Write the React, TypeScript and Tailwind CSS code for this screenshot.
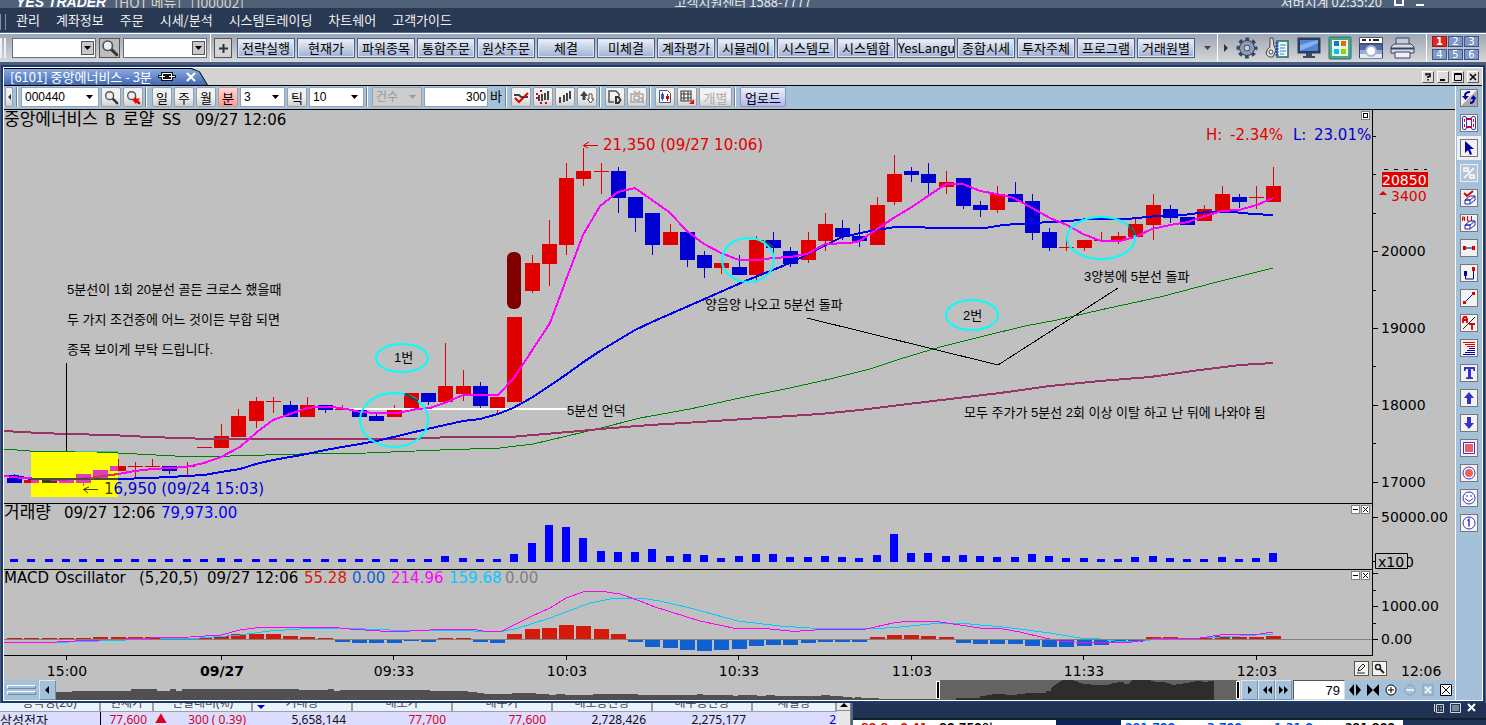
import type { ReactNode } from 'react';

const MENU = ['관리', '계좌정보', '주문', '시세/분석', '시스템트레이딩', '차트쉐어', '고객가이드'];

const QUICK_BUTTONS = [
  '전략실행', '현재가', '파워종목', '통합주문', '원샷주문', '체결', '미체결', '계좌평가',
  '시뮬레이', '시스템모', '시스템합', 'YesLangu', '종합시세', '투자주체', '프로그램', '거래원별',
];

const RED = '#e00000';
const BLUE = '#0000d0';
const PINK = '#e03cc0';
const OLIVE = '#404010';

// [color, body top, body bottom, high, low]
type Candle = [string, number, number, number, number];

const CANDLES: Candle[] = [
  [BLUE, 478, 483, 474, 483],
  [PINK, 480, 483, 480, 483],
  [OLIVE, 480, 483, 480, 483],
  [PINK, 480, 483, 480, 483],
  [PINK, 474, 483, 474, 486],
  [PINK, 470, 478, 470, 478],
  [RED, 466, 471, 459, 471],
  [RED, 466, 467, 462, 477],
  [RED, 466, 467, 459, 467],
  [BLUE, 466, 471, 466, 474],
  [RED, 466, 467, 462, 476],
  [RED, 447, 448, 447, 448],
  [RED, 436, 448, 424, 448],
  [RED, 416, 437, 409, 437],
  [RED, 401, 421, 397, 428],
  [RED, 401, 402, 397, 413],
  [BLUE, 405, 417, 401, 417],
  [RED, 405, 417, 397, 417],
  [BLUE, 405, 410, 405, 413],
  [RED, 409, 410, 405, 410],
  [BLUE, 409, 417, 409, 417],
  [BLUE, 416, 421, 412, 421],
  [RED, 409, 417, 405, 417],
  [RED, 393, 410, 393, 410],
  [BLUE, 393, 402, 393, 405],
  [RED, 386, 402, 343, 402],
  [RED, 386, 394, 370, 401],
  [BLUE, 386, 406, 382, 409],
  [RED, 397, 410, 397, 414],
  [RED, 317, 402, 317, 402],
  [RED, 263, 291, 255, 293],
  [RED, 244, 264, 220, 286],
  [RED, 178, 245, 163, 255],
  [RED, 171, 179, 148, 186],
  [RED, 171, 172, 163, 194],
  [BLUE, 171, 198, 167, 213],
  [BLUE, 197, 218, 197, 232],
  [BLUE, 213, 245, 213, 255],
  [RED, 232, 245, 224, 245],
  [BLUE, 232, 260, 232, 267],
  [BLUE, 255, 268, 251, 278],
  [RED, 263, 268, 263, 274],
  [BLUE, 267, 275, 255, 275],
  [RED, 240, 275, 236, 282],
  [BLUE, 240, 248, 232, 258],
  [BLUE, 251, 264, 247, 267],
  [RED, 240, 260, 232, 263],
  [RED, 224, 241, 213, 251],
  [BLUE, 228, 237, 220, 240],
  [BLUE, 236, 241, 224, 247],
  [RED, 205, 245, 197, 245],
  [RED, 174, 202, 155, 205],
  [BLUE, 171, 175, 167, 182],
  [BLUE, 174, 183, 163, 194],
  [RED, 182, 187, 171, 194],
  [BLUE, 178, 206, 178, 209],
  [BLUE, 205, 210, 201, 217],
  [RED, 194, 210, 186, 213],
  [BLUE, 194, 202, 182, 202],
  [BLUE, 201, 233, 194, 240],
  [BLUE, 232, 248, 228, 251],
  [RED, 247, 248, 236, 251],
  [RED, 240, 248, 240, 251],
  [RED, 240, 241, 232, 241],
  [RED, 236, 241, 232, 244],
  [RED, 224, 237, 217, 237],
  [RED, 205, 225, 194, 240],
  [BLUE, 209, 218, 205, 223],
  [BLUE, 217, 225, 217, 225],
  [RED, 209, 221, 205, 221],
  [RED, 194, 213, 186, 213],
  [BLUE, 197, 202, 194, 208],
  [RED, 197, 198, 186, 209],
  [RED, 186, 202, 167, 202],
];

const VOLUME = [
  3, 3, 3, 3, 3, 3, 3, 3, 3, 3, 3, 3, 4, 3, 3, 3, 3, 3, 3, 3, 3, 3, 3, 3, 3, 6, 4, 3, 3, 8, 19, 37, 35, 24, 11,
  10, 10, 13, 6, 8, 7, 4, 6, 8, 8, 5, 5, 6, 5, 4, 7, 28, 9, 9, 6, 7, 6, 5, 5, 8, 6, 4, 4, 3, 3, 5, 6, 4, 3, 3, 5,
  3, 4, 9,
];

const OSCILLATOR = [
  1, 1, 1, 1, 1, 2, 2, 2, 2, 1, 0, 1, 3, 5, 5, 5, 3, 2, 1, -2, -3, -3, -3, -1, -2, 1, 1, -2, -3, 5, 10, 11, 14,
  13, 10, 5, -2, -7, -8, -10, -11, -10, -9, -6, -5, -5, -3, -2, -2, -2, 2, 4, 4, 3, 2, -3, -4, -4, -4, -6, -7, -7,
  -6, -5, -2, -2, 2, 2, 1, 1, 3, 2, 2, 3,
];

const MA5 =
  '4,476 22,478 60,480 90,478 118,474 135,471 152,469 170,468 186,467 204,463 221,457 240,447 257,432 273,420 307,408 317,407 332,407 347,409 360,412 377,413 398,413 417,409 430,408 447,402 463,395 498,395 514,378 550,323 566,280 583,235 600,206 618,192 635,188 652,200 669,212 687,231 704,244 721,253 739,260 758,260 773,258 790,257 807,254 825,244 850,243 860,241 877,229 895,217 912,207 928,196 946,184 963,184 980,191 997,194 1014,198 1032,208 1050,218 1067,225 1083,234 1101,241 1120,241 1135,237 1152,229 1170,225 1188,222 1205,216 1222,211 1239,210 1257,205 1273,198';
const MA20 =
  '4,476 16,476 31,479 118,479 150,478 187,476 204,475 221,472 240,469 256,464 273,460 307,454 325,450 377,441 427,429 463,421 480,419 498,414 513,408 533,397 567,374 582,363 600,351 635,330 652,322 700,301 743,282 790,263 812,252 842,237 870,231 895,227 920,227 930,228 985,228 1003,225 1033,223 1070,221 1087,219 1127,219 1157,216 1183,215 1207,212 1233,212 1253,214 1273,215';
const MA60 =
  '4,449 30,451 75,451 118,453 175,456 230,456 300,454 367,453 440,450 500,448 533,444 567,436 597,429 640,418 690,409 740,398 790,388 830,379 870,369 900,359 940,347 980,337 1025,326 1057,320 1100,310 1160,297 1217,282 1273,268';
const MA120 =
  '4,431 40,433 67,434 110,435 150,437 210,439 330,439 410,439 450,437 510,437 545,434 580,431 600,429 650,425 700,422 760,418 820,414 860,410 900,405 950,399 1000,393 1050,386 1100,381 1150,377 1200,370 1240,365 1273,363';
const MACD =
  '4,642 57,642 75,641 125,639 150,638 190,637 221,635 240,630 262,627 285,627 330,627 350,629 380,631 394,632 410,631 450,629 470,629 490,632 502,631 532,616 550,608 566,598 583,592 600,591 620,594 640,601 655,607 700,621 738,629 760,628 790,631 800,631 830,629 862,630 875,627 893,623 910,621 940,622 960,625 980,628 1003,629 1020,632 1045,638 1060,641 1075,642 1125,643 1145,640 1160,638 1200,638 1220,635 1260,634 1273,632';
const SIGNAL =
  '4,643 70,642 126,640 160,639 200,638 240,635 270,631 300,629 340,628 390,630 450,630 498,632 515,629 550,618 566,612 590,603 615,598 640,598 660,601 690,608 738,621 780,626 810,628 870,629 900,627 930,624 960,623 980,625 1003,627 1050,633 1080,638 1100,639 1115,641 1140,641 1160,639 1200,638 1240,636 1273,634';

const HISTORY =
  'M56 700V692H72V691H131V689H157V691H170V689H176V691H182V689H299V690H328V689H334V691H340V690H430V691H468V692H477V693H484V694H512V693H536V694H549V695H556V694H565V695H593V694H638V695H697V694H703V695H733V696H738V695H757V696H766V695H775V696H821V695H830V696H843V697H852V698H855V697H861V698H879V699H939V700z';
const HISTORY_SELECTED =
  'M956 700V698H980V696H986V695H992V694H1006V695H1017V694H1025V693H1046V691H1051V688L1058 683L1063 680H1073L1083 684L1099 685H1109V684L1119 682H1124V684H1128L1133 680H1149L1156 682H1164L1173 685L1186 683L1196 681H1202V682L1214 681V700z';

const TIMES: [string, number][] = [
  ['15:00', 66], ['09/27', 221], ['09:33', 393], ['10:03', 566], ['10:33', 738], ['11:03', 911], ['11:33', 1083], ['12:03', 1256],
];

const barX = (i: number) => Math.round(14 + i * 17.25);

function Caret({ className = '' }: { className?: string }) {
  return (
    <svg className={`pointer-events-none absolute ${className}`} width="7" height="4" aria-hidden="true">
      <path d="M0 0h7L3.5 4z" fill="currentColor" />
    </svg>
  );
}

// drop-down with a raised grey arrow, used in the main toolbar
function Combo({ label }: { label: string }) {
  return (
    <div className="relative h-5 w-[84px] border border-[#5d6f8d] bg-white">
      <select aria-label={label} className="h-4 w-full appearance-none bg-white" />
      <span className="pointer-events-none absolute top-0.5 right-px h-3.5 w-[13px] border border-[#555] bg-[#c8c8c8]" />
      <Caret className="top-[7px] right-1 text-black" />
    </div>
  );
}

function FlatSelect({ label, value, className, disabled }: { label: string; value: string; className: string; disabled?: boolean }) {
  return (
    <div className={`relative h-5 border ${disabled ? 'border-[#a0a0a0] bg-[#cdcdcd] text-[#9a9a9a]' : 'border-[#8fa3b8] bg-white text-black'} ${className}`}>
      <select
        aria-label={label}
        disabled={disabled}
        className="h-[18px] w-full appearance-none pl-[3px] font-['Liberation_Sans','Noto_Sans_CJK_KR',sans-serif] text-xs leading-[18px] opacity-100"
      >
        <option>{value}</option>
      </select>
      <Caret className="top-[7px] right-[5px]" />
    </div>
  );
}

function Sep() {
  return <span className="h-5 w-0.5 border-l border-[#6f7f90] bg-white" />;
}

function ToolButton({ children, label, className = 'w-5', disabled }: { children: ReactNode; label?: string; className?: string; disabled?: boolean }) {
  return (
    <button
      type="button"
      aria-label={label}
      disabled={disabled}
      className={`flex h-5 items-center justify-center rounded-xs border border-[#9a9fa6] bg-linear-to-b from-[#f2f2f2] from-50% to-[#d0d0d0] leading-none ${className}`}
    >
      {children}
    </button>
  );
}

function Lens({ size = 16, arrow = false }: { size?: number; arrow?: boolean }) {
  return (
    <svg width={size} height={size} viewBox="0 0 16 16" fill="none" aria-hidden="true">
      <path d="M9 9l5 5" stroke="#333" strokeWidth="2.6" strokeLinecap="round" />
      <circle cx="6" cy="6" r="4.2" fill="#e8f0f6" stroke="#555" strokeWidth="1.5" />
      {arrow && <path d="M7 11l4-4v2.500l4-1-2 3 2 3-4-1v2z" fill="#f00" />}
    </svg>
  );
}

function TitleStrip() {
  return (
    <header className="flex h-2 shrink-0 items-end justify-between overflow-hidden bg-[#4f6079] text-white">
      <div className="flex w-1/3 items-end gap-2 pl-4 leading-3">
        <span className="font-['Liberation_Sans',sans-serif] text-sm leading-3 font-bold whitespace-nowrap italic">YES TRADER</span>
        <span className="text-sm leading-3 whitespace-pre text-[#d9d0c4]">[HOT 메뉴]   [j00002]</span>
      </div>
      <span className="text-[13px] leading-3 text-[#e4e8ee]">고객지원센터 1588-7777</span>
      <div className="flex w-1/3 justify-end gap-3 pr-[62px] text-[13px] leading-3 text-[#e4e8ee]">
        <span>서버시계 02:35:20</span>
        <span className="size-2.5 border-2 border-white" />
        <span className="h-2.5 w-2 border-b-2 border-white" />
      </div>
    </header>
  );
}

function MenuBar() {
  return (
    <nav className="flex h-6 shrink-0 items-center bg-[#293953] text-[13px] text-[#f0f0f0]">
      <span className="mt-1 h-4 w-1.5 border-x border-[#8290a6]" />
      <ul className="flex gap-4 pl-2.5">
        {MENU.map((item) => (
          <li key={item}>
            <a href="#" className="block leading-[22px]">{item}</a>
          </li>
        ))}
      </ul>
    </nav>
  );
}

function MainIcons() {
  return (
    <div className="flex items-center gap-[7px] pl-[7px]">
      <button type="button" aria-label="설정">
        <svg width="22" height="22" viewBox="0 0 22 22" fill="none">
          <circle cx="11" cy="11" r="8.500" stroke="#38465f" strokeWidth="4" strokeDasharray="3.600 3.075" strokeDashoffset="1.800" />
          <circle cx="11" cy="11" r="6" stroke="#38465f" strokeWidth="4" />
          <circle cx="11" cy="11" r="5.500" stroke="#8d9cb5" strokeWidth="3" />
          <circle cx="11" cy="11" r="3" fill="#c8ccd4" stroke="#38465f" />
        </svg>
      </button>
      <button type="button" aria-label="키 관리">
        <svg width="25" height="24" viewBox="0 0 25 24" fill="none">
          <path d="M5 2h3l1 8 2 4-3 7H4l-3-3 1-4 3-3z" fill="#ddd" stroke="#444" />
          <circle cx="6" cy="16" r="2" fill="#fff" stroke="#444" />
          <path d="M12 5h11v16H12z" fill="#eef6fb" stroke="#1e6a66" strokeWidth="1.500" />
          <path d="M15 9h6M15 12h5M15 15h6M15 18h4" stroke="#3c86a8" />
          <path d="M12 6v15" stroke="#2456c8" strokeWidth="3" strokeDasharray="2 1" />
        </svg>
      </button>
      <button type="button" aria-label="화면">
        <svg width="24" height="24" viewBox="0 0 24 24">
          <path d="M.5 1.500h23v16H.5z" fill="#2d3c5c" />
          <path d="M3 4h18v11H3z" fill="#4f86d9" />
          <path d="M3 15V9l18-5v3z" fill="#83b2f0" />
          <path d="M9 17h6v3h3v2H6v-2h3z" fill="#3d4960" />
        </svg>
      </button>
      <button type="button" aria-label="배치">
        <svg width="24" height="24" viewBox="0 0 24 24">
          <rect x="1" y="1" width="22" height="22" rx="1" fill="#4fa58f" stroke="#2a7565" />
          <path d="M4 4h16v16H4z" fill="#e6f4ef" />
          <path d="M6 5h5v5H6z" fill="#1b78b8" />
          <path d="M13 5h5v5h-5z" fill="#e07000" />
          <path d="M6 13h5v5H6z" fill="#00c8e0" />
          <path d="M13 13h5v5h-5z" fill="#8ed400" />
        </svg>
      </button>
      <button type="button" aria-label="캡처">
        <svg width="24" height="24" viewBox="0 0 24 24">
          <path d="M.5 1.500h23v6H.5z" fill="#fff" stroke="#475570" />
          <path d="M3 4h4M10 4h2M14 4h6" stroke="#223" strokeWidth="2" />
          <path d="M.5 8h23v14H.5z" fill="#5369a8" stroke="#33415c" />
          <path d="M1 14h22v4H1z" fill="#9aa9d4" />
          <path d="M1 18h22v4H1z" fill="#e4e9f6" />
          <circle cx="12" cy="15" r="5" fill="#fff" stroke="#a8b4d8" strokeWidth="2" />
        </svg>
      </button>
      <button type="button" aria-label="인쇄">
        <svg width="25" height="24" viewBox="0 0 25 24">
          <path d="M6 2h13v9H6z" fill="#c4ccda" stroke="#38455f" />
          <path d="M1 11l3-3h17l3 3v6H1z" fill="#d6dbe5" stroke="#38455f" />
          <path d="M1 12.500h23" stroke="#38455f" strokeWidth="2" />
          <path d="M5 16h15v6H5z" fill="#eef" stroke="#38455f" />
        </svg>
      </button>
    </div>
  );
}

function MainToolbar() {
  return (
    <div className="flex h-7 shrink-0 items-center overflow-hidden bg-linear-to-b from-[#9fa6b2] to-[#d6d8da] text-[13px]">
      <span className="h-5 w-1.5 shrink-0 border-x-2 border-[#eef0f3]" />
      <div className="flex items-center gap-[3px] pl-1.5">
        <Combo label="화면 번호" />
        <button type="button" aria-label="검색" className="flex h-5 w-[21px] items-center justify-center border border-[#555] bg-[#bdbdbd]">
          <Lens size={18} />
        </button>
        <Combo label="즐겨찾기" />
      </div>
      <span className="mx-[3px] h-7 w-px shrink-0 bg-white" />
      <button type="button" aria-label="추가" className="flex h-5 w-[18px] shrink-0 items-center justify-center border border-[#555] bg-[#d4d4d4]">
        <svg width="9" height="9"><path d="M3.500 0h2v3.500H9v2H5.500V9h-2V5.500H0v-2h3.500z" fill="#333" /></svg>
      </button>
      <div className="flex gap-0.5 pl-[5px]">
        {QUICK_BUTTONS.map((name) => (
          <button
            key={name}
            type="button"
            className="h-5 w-[58px] shrink-0 overflow-hidden border border-[#45608f] bg-linear-to-b from-[#eef1f8] to-[#9fb0d0] text-center leading-4 whitespace-nowrap inset-ring inset-ring-[#dfe6f2]"
          >
            {name}
          </button>
        ))}
      </div>
      <button type="button" aria-label="더 보기" className="relative ml-[9px] h-5 w-2 shrink-0 text-[#444]">
        <Caret className="top-2 left-0" />
      </button>
      <span className="ml-[5px] h-7 w-px shrink-0 bg-white" />
      <svg width="5" height="8" className="ml-1.5 shrink-0"><path d="M0 0v8l4-4z" fill="#333" /></svg>
      <MainIcons />
      <span className="ml-[11px] h-7 w-px shrink-0 bg-white" />
      <div className="ml-auto grid shrink-0 grid-cols-3 gap-x-px gap-y-0.5 pr-[7px]">
        {[1, 2, 3, 4, 5, 6].map((n) => (
          <button
            key={n}
            type="button"
            className={`h-[11px] w-[15px] border text-center font-['DejaVu_Sans',sans-serif] text-[10px] leading-[9px] text-white ${n === 1 ? 'border-[#a01818] bg-[#d82828] font-bold' : 'border-[#3a5590] bg-[#7f98c4]'}`}
          >
            {n}
          </button>
        ))}
      </div>
    </div>
  );
}

function WindowButton({ label, children }: { label: string; children: ReactNode }) {
  return (
    <button type="button" aria-label={label} className="size-3 border border-t-white border-r-[#555] border-b-[#555] border-l-white bg-[#dcdcdc]">
      <svg viewBox="0 0 10 10" width="10" height="10" fill="none" stroke="#000" strokeWidth="1.500">{children}</svg>
    </button>
  );
}

function WindowTitle() {
  return (
    <div className="flex h-[18px] items-center justify-between border-b border-black bg-[#d3d3d3]">
      <div className="h-[17px] bg-black pr-px [clip-path:polygon(0_0,92%_0,96%_20%,100%_100%,0_100%)]">
        <div className="flex h-[17px] w-[203px] items-center gap-1.5 bg-linear-to-b from-[#8fb0e6] to-[#4266b0] pl-1.5 text-[13px] leading-none text-white [clip-path:polygon(0_1px,92%_1px,96%_22%,100%_100%,0_100%)]">
          <h1 className="whitespace-nowrap">[6101] 중앙에너비스 - 3분</h1>
          <svg width="18" height="9" viewBox="0 0 18 9" fill="none" stroke="#111" strokeWidth="1.200">
            <path d="M4.500 4V1.500h9V4M4.500 5v2.500h9V5" strokeWidth="3" />
            <path d="M0 4.500h18" strokeWidth="3" />
            <path d="M4.500 4V1.500h9V4M4.500 5v2.500h9V5" stroke="#fff" strokeWidth="1" />
            <path d="M1 4.500h6M11 4.500h6" stroke="#fff" />
          </svg>
          <button type="button" aria-label="탭 닫기" className="ml-1">
            <svg width="10" height="10" stroke="#fff" strokeWidth="2.200"><path d="M1 1l8 8M9 1l-8 8" /></svg>
          </button>
        </div>
      </div>
      <div className="flex gap-[3px] pr-[3px]">
        <WindowButton label="도움말"><path d="M3 3.500V2h4v2.500H5V6M5 7v1.500" /></WindowButton>
        <WindowButton label="최소화"><path d="M2 8h5" strokeWidth="2" /></WindowButton>
        <WindowButton label="최대화"><path d="M1.500 1.500h7v7h-7zM1 2.500h8" strokeWidth="1" /></WindowButton>
        <WindowButton label="닫기"><path d="M2 2l6 6M8 2L2 8" /></WindowButton>
      </div>
    </div>
  );
}

function ChartToolbar() {
  return (
    <div className="flex h-6 items-start overflow-hidden border-b border-black bg-[#a5c0d9] pt-px text-[13px] leading-none">
      <ToolButton label="접기" className="ml-px w-2">
        <svg width="3" height="6"><path d="M3 0v6L0 3z" fill="#333" /></svg>
      </ToolButton>
      <div className="flex pl-[3px]"><Sep /></div>
      <div className="flex gap-0.5 pl-[3px]">
        <FlatSelect label="종목코드" value="000440" className="w-[78px]" />
        <ToolButton label="종목 검색"><Lens size={15} /></ToolButton>
        <ToolButton label="이전 종목"><Lens size={15} arrow /></ToolButton>
        <Sep />
      </div>
      <div className="flex gap-0.5 pl-[5px]">
        <ToolButton>일</ToolButton>
        <ToolButton>주</ToolButton>
        <ToolButton>월</ToolButton>
        <button type="button" className="h-5 w-5 rounded-xs border border-[#b8a08c] bg-linear-to-b from-[#ffd8d8] to-[#ff9a9a] leading-none">분</button>
        <FlatSelect label="분 간격" value="3" className="w-[45px]" />
        <ToolButton>틱</ToolButton>
        <FlatSelect label="틱 간격" value="10" className="w-[55px]" />
        <Sep />
      </div>
      <label className="flex gap-0.5 pl-1">
        <FlatSelect label="건수" value="건수" disabled className="w-[50px]" />
        <input
          aria-label="봉 개수"
          defaultValue="300"
          className="h-5 w-16 border border-[#8fa3b8] bg-white pr-px text-right font-['Liberation_Sans',sans-serif] text-xs"
        />
        <span className="leading-[18px]">바</span>
      </label>
      <div className="flex gap-0.5 pl-[3px]">
        <Sep />
        <ToolButton label="추세" className="ml-0.5 w-5">
          <svg width="16" height="16" fill="none"><path d="M1 6h5l2 2h7" stroke="#444" strokeWidth="2" /><path d="M2 9l4 4 9-9" stroke="#e00000" strokeWidth="2" /></svg>
        </ToolButton>
        <ToolButton label="신호">
          <svg width="16" height="16" fill="none" strokeWidth="2"><path d="M4 6v6M7 5v7M10 4v7M13 2v9" stroke="#444" /><path d="M6 1v2M2 4v2M6 13v2M11 13v2M2 8v2" stroke="#e00000" /></svg>
        </ToolButton>
        <ToolButton label="봉">
          <svg width="16" height="16" strokeWidth="2"><path d="M3 8v6M7 6v7M10 4v8M13 2v8" stroke="#444" /></svg>
        </ToolButton>
        <ToolButton label="정렬">
          <svg width="16" height="16"><path d="M5 2L1 7h2.500v4h3V7H9z" fill="#444" /><path d="M11.500 14l-3-4H10V5h3v5h2z" fill="#fff" stroke="#444" /></svg>
        </ToolButton>
        <Sep />
      </div>
      <div className="flex gap-0.5 pl-1">
        <ToolButton label="문서">
          <svg width="16" height="16" fill="none" stroke="#555" strokeWidth="1.500"><path d="M7 13H2V2h7l3 3v2" /><path d="M9 8h2.500l2 3-2 3H9z" stroke="#333" strokeWidth="2" /></svg>
        </ToolButton>
        <ToolButton label="방송" disabled>
          <svg width="16" height="16" fill="none" stroke="#aaa" strokeWidth="1.500"><path d="M2 5h12v8H2zM5 2l3 3 3-3M5 7h5v4H5zM10 14V9h3v2l2 3" /></svg>
        </ToolButton>
        <Sep />
      </div>
      <div className="flex gap-0.5 pl-1">
        <ToolButton label="비교 차트">
          <svg width="16" height="16" fill="none"><path d="M2.500 13.500v-12h8l3 3v9z" fill="#fff" stroke="#555" /><path d="M5.500 3v9" stroke="#2060e0" /><path d="M5.500 5v5" stroke="#2060e0" strokeWidth="3" /><path d="M10.500 5v7" stroke="#e00000" /><path d="M10.500 7v3" stroke="#e00000" strokeWidth="3" /></svg>
        </ToolButton>
        <ToolButton label="격자">
          <svg width="16" height="16" fill="none"><path d="M2 2h10v10H2zM2 5h10M2 9h10M5 2v10M9 2v10" stroke="#444" strokeWidth="1.200" /><path d="M15 10v5h-5z" fill="#f00" /></svg>
        </ToolButton>
        <ToolButton className="w-[33px] text-[#aaa]" disabled>개별</ToolButton>
        <Sep />
        <button type="button" className="ml-0.5 h-5 w-[46px] rounded-xs border border-[#8e94b4] bg-linear-to-b from-[#eceeff] to-[#b3b8ea] leading-none">업로드</button>
      </div>
    </div>
  );
}

function AxisTick({ y, label, small }: { y: number; label?: string; small?: boolean }) {
  return (
    <>
      <path d={`M1372 ${y}.5h${small ? 4 : 6}`} stroke="#000" shapeRendering="crispEdges" />
      {label && <text x="1381" y={y + 5} className="text-[14px]">{label}</text>}
    </>
  );
}

function PriceChart() {
  return (
    <div className="relative">
      <svg viewBox="4 110 1451 393" className="block h-auto w-full font-['DejaVu_Sans','Noto_Sans_CJK_KR',sans-serif] text-[15px]">
        <path d="M31 451h87v46H31z" fill="#ff0" />
        <g shapeRendering="crispEdges">
          {CANDLES.map(([color, top, bottom, high, low], i) => (
            <g key={i} fill={color}>
              <rect x={barX(i)} y={high} width="1" height={low - high} />
              <rect x={barX(i) - 7} y={top} width="15" height={bottom - top} />
            </g>
          ))}
          <path d="M24 480h7v3h-7z" fill={RED} />
          <path d="M110 466h8v5h-8z" fill={PINK} />
        </g>
        <g fill="none" shapeRendering="crispEdges">
          <path d="M343 409h224" stroke="#fff" strokeWidth="2" />
          <polyline points={MA60} stroke="#008000" />
          <polyline points={MA120} stroke="#993366" strokeWidth="2" />
          <polyline points={MA20} stroke="#0000f0" strokeWidth="2" />
          <polyline points={MA5} stroke="#f0f" strokeWidth="2" />
          <path d="M31 479h87" stroke="#4a4a3a" strokeWidth="2" />
          <path d="M90 478l28-4" stroke="#c83c50" strokeWidth="2" />
          <path d="M75 451.500h43" stroke="#40c0a0" />
        </g>
        <rect x="507" y="252" width="14" height="57" rx="6" fill="#800000" />
        <g fill="none" stroke="#0ff" strokeWidth="2">
          <ellipse cx="402" cy="358" rx="26" ry="14" />
          <ellipse cx="394" cy="420" rx="34" ry="27" />
          <ellipse cx="748" cy="260" rx="26" ry="22" />
          <ellipse cx="1101" cy="238" rx="34" ry="21" />
          <ellipse cx="972" cy="315" rx="26" ry="15" />
        </g>
        <g fill="none" stroke="#204848" strokeWidth="2">
          <path d="M405 394l13 7M765 241l8 6M1129 225l6 10" />
        </g>
        <g fill="none" stroke="#000" shapeRendering="crispEdges">
          <path d="M66.500 363v88" />
          <path d="M807 318l191 47 120-77" />
        </g>

        <g className="font-['Liberation_Sans','Noto_Sans_CJK_KR',sans-serif] text-[13px]">
          <text x="67" y="294">5분선이 1회 20분선 골든 크로스 했을때</text>
          <text x="67" y="324">두 가지 조건중에 어느 것이든 부합 되면</text>
          <text x="67" y="354">종목 보이게 부탁 드립니다.</text>
          <text x="394" y="362">1번</text>
          <text x="567" y="415">5분선 언덕</text>
          <text x="705" y="309">양음양 나오고 5분선 돌파</text>
          <text x="963" y="320">2번</text>
          <text x="1084" y="281">3양봉에 5분선 돌파</text>
          <text x="964" y="417">모두 주가가 5분선 2회 이상 이탈 하고 난 뒤에 나와야 됨</text>
        </g>

        <text x="4" y="125" className="text-[17px]">중앙에너비스</text>
        <text x="105" y="125">B</text>
        <text x="123" y="125" className="text-[17px]">로얄</text>
        <text x="162" y="125">SS</text>
        <text x="195" y="125">09/27 12:06</text>
        <g fill={RED}>
          <path d="M583 145.500h15M584 145l5-3M584 146l4 2" stroke={RED} fill="none" />
          <text x="603" y="150">21,350 (09/27 10:06)</text>
          <text x="1206" y="140">H:</text>
          <text x="1230" y="140">-2.34%</text>
        </g>
        <g fill={BLUE}>
          <text x="1293" y="140">L:</text>
          <text x="1314" y="140">23.01%</text>
          <path d="M83 489.500h15M84 490l4 3M84 489l5-2" stroke={OLIVE} fill="none" />
          <text x="104" y="494"><tspan fill={OLIVE}>1</tspan>6,950 (09/24 15:03)</text>
        </g>

        <path d="M1372.500 110v393" stroke="#000" shapeRendering="crispEdges" />
        {[136, 174, 213, 290, 366, 443].map((y) => <AxisTick key={y} y={y} small />)}
        <AxisTick y={251} label="20000" />
        <AxisTick y={328} label="19000" />
        <AxisTick y={405} label="18000" />
        <AxisTick y={482} label="17000" />
        <path d="M1384 169.500h43" stroke="#000" strokeDasharray="4 6" />
        <path d="M1382 172h46v15h-46z" fill={RED} />
        <text x="1382" y="185" fill="#fff" className="text-[14px]">20850</text>
        <path d="M1379 195h8l-4-4z" fill={RED} />
        <text x="1391" y="201" fill={RED} className="text-[14px]">3400</text>
      </svg>
      <button type="button" aria-label="패널 확대" className="absolute top-px right-[85px] size-[9px] border border-[#808080] bg-white">
        <span className="m-px block size-[5px] border border-black" />
      </button>
    </div>
  );
}

function PanelButtons() {
  return (
    <div className="absolute top-0.5 right-[85px] flex gap-px">
      <button type="button" aria-label="패널 최소화" className="size-[9px] border border-[#808080] bg-white">
        <svg width="7" height="7" className="block"><path d="M1 3.500h5" stroke="#000" /></svg>
      </button>
      <button type="button" aria-label="패널 닫기" className="size-[9px] border border-[#808080] bg-white">
        <svg width="7" height="7" className="block"><path d="M1 1l5 5M6 1L1 6" stroke="#000" /></svg>
      </button>
    </div>
  );
}

function VolumeChart() {
  return (
    <div className="relative">
      <svg viewBox="4 503 1451 66" className="block h-auto w-full font-['DejaVu_Sans','Noto_Sans_CJK_KR',sans-serif] text-[15px]">
        <path d="M4 503.500h1368M1372.500 503v66" stroke="#000" shapeRendering="crispEdges" />
        <g fill="#00f" shapeRendering="crispEdges">
          {VOLUME.map((h, i) => <rect key={i} x={barX(i) - 4} y={562 - h} width="8" height={h} />)}
        </g>
        <text x="4" y="518" className="text-[17px]">거래량</text>
        <text x="64" y="518">09/27 12:06</text>
        <text x="161" y="518" fill="#00f">79,973.00</text>
        <AxisTick y={517} label="50000.00" />
        <AxisTick y={561} />
        <text x="1405" y="567" className="text-[14px]">0</text>
        <path d="M1375.500 553.500h32v15h-32z" fill="#c0c0c0" stroke="#000" />
        <text x="1378" y="567" className="text-[14px]">x10</text>
      </svg>
      <PanelButtons />
    </div>
  );
}

function MacdChart() {
  return (
    <div className="relative">
      <svg viewBox="4 569 1451 86" className="block h-auto w-full font-['DejaVu_Sans',sans-serif] text-[15px]">
        <g shapeRendering="crispEdges">
          <path d="M4 569.500h1368M1372.500 569v86" stroke="#000" />
          {OSCILLATOR.map((h, i) => (
            <rect key={i} x={barX(i) - 7} y={h > 0 ? 639 - h : 640} width="15" height={Math.abs(h)} fill={h > 0 ? '#d41a0a' : '#1260d0'} />
          ))}
          <polyline points={SIGNAL} fill="none" stroke="#0cf" />
          <polyline points={MACD} fill="none" stroke="#f0f" />
          <path d="M4 639.500h1368" stroke="#808080" />
        </g>
        <text x="4" y="583">MACD</text>
        <text x="55" y="583">Oscillator</text>
        <text x="139" y="583">(5,20,5)</text>
        <text x="207" y="583">09/27 12:06</text>
        <text x="304" y="583" fill="#d41a0a">55.28</text>
        <text x="352" y="583" fill="#1260d0">0.00</text>
        <text x="391" y="583" fill="#f0f">214.96</text>
        <text x="449" y="583" fill="#0cf">159.68</text>
        <text x="505" y="583" fill="#808080">0.00</text>
        <AxisTick y={573} />
        <AxisTick y={590} small />
        <AxisTick y={606} label="1000.00" />
        <AxisTick y={623} small />
        <AxisTick y={639} label="0.00" />
      </svg>
      <PanelButtons />
    </div>
  );
}

function TimeAxis() {
  return (
    <div className="relative">
      <svg viewBox="4 655 1451 25" className="block h-auto w-full font-['DejaVu_Sans',sans-serif] text-[14px]">
        <path d="M4 655.500h1369" stroke="#000" shapeRendering="crispEdges" />
        {TIMES.map(([label, x]) => (
          <g key={label}>
            <path d={`M${x}.5 655v5`} stroke="#000" shapeRendering="crispEdges" />
            <text x={x + 1} y="676" textAnchor="middle" className={label === '09/27' ? 'font-bold' : ''}>{label}</text>
          </g>
        ))}
        <text x="1401" y="676">12:06</text>
      </svg>
      <div className="absolute top-1.5 right-[68px] flex gap-[3px]">
        <button type="button" aria-label="그리기" className="size-[15px] border border-[#555] bg-[#f4f4ee]">
          <svg width="13" height="13" fill="none" stroke="#222"><path d="M3 9l1-3 4-4 2 2-4 4zM2 11h8" /></svg>
        </button>
        <button type="button" aria-label="확대" className="size-[15px] border border-[#555] bg-[#f4f4ee]">
          <svg width="13" height="13" fill="none" stroke="#222"><circle cx="5" cy="5" r="2.500" strokeWidth="1.500" /><path d="M7 7l4 4" strokeWidth="2" /></svg>
        </button>
      </div>
    </div>
  );
}

function NavButton({ label, path }: { label: string; path: string }) {
  return (
    <button type="button" aria-label={label} className="flex h-5 w-[17px] shrink-0 items-center justify-center border border-t-[#dbe8f4] border-r-[#7790a8] border-b-[#7790a8] border-l-[#dbe8f4] bg-[#a5c0d9]">
      <svg width="10" height="8"><path d={path} /></svg>
    </button>
  );
}

function Navigator() {
  return (
    <div className="flex h-5 items-center bg-[#a5c0d9]">
      <div className="flex w-[35px] flex-col gap-0.5 px-[3px]">
        <span className="h-1 border border-t-white border-r-[#6f8ba5] border-b-[#6f8ba5] border-l-white" />
        <span className="h-1 border border-t-white border-r-[#6f8ba5] border-b-[#6f8ba5] border-l-white" />
      </div>
      <NavButton label="왼쪽으로" path="M6 0v8L2 4z" />
      <svg viewBox="56 680 1185 20" preserveAspectRatio="none" className="h-5 min-w-0 flex-1" shapeRendering="crispEdges">
        <path d="M56 680h1185v20H56z" fill="#c0c0c0" />
        <path d={HISTORY} fill="#505050" />
        <path d="M940 680h297v20H940z" fill="#636363" />
        <path d={HISTORY_SELECTED} fill="#2d2d2d" />
        <path d="M936 681h4v18h-4zM1236 681h4v18h-4z" fill="#fff" />
        <path d="M937 682h2v16h-2zM1237 682h2v16h-2z" fill="#000" />
      </svg>
      <NavButton label="오른쪽으로" path="M3 0v8l4-4z" />
      <NavButton label="처음으로" path="M5 0v8L1 4zM10 0v8L6 4z" />
      <NavButton label="끝으로" path="M0 0v8l4-4zM5 0v8l4-4z" />
      <input
        aria-label="표시 봉 수"
        defaultValue="79"
        className="mx-px h-5 w-[52px] border border-t-[#555] border-r-[#ddd] border-b-[#ddd] border-l-[#555] bg-white pr-1 text-right font-['Liberation_Sans',sans-serif] text-[13px]"
      />
      <div className="flex w-[109px] items-center justify-around">
        <button type="button" aria-label="넓게"><svg width="12" height="12"><path d="M5 0v12L0 6zM7 0v12l5-6z" /></svg></button>
        <button type="button" aria-label="좁게"><svg width="12" height="12"><path d="M0 0v12l6-6zM12 0v12L6 6z" /></svg></button>
        <button type="button" aria-label="확대"><svg width="12" height="12" fill="#fff" stroke="#000"><circle cx="6" cy="6" r="5" /><path d="M3 6h6M6 3v6" /></svg></button>
        <button type="button" aria-label="축소" disabled><svg width="12" height="12" fill="none" stroke="#e6eef5"><circle cx="6" cy="6" r="5" stroke="#8c9cac" /><path d="M2 6h8" strokeWidth="2" /></svg></button>
        <button type="button" aria-label="맞춤" disabled><svg width="12" height="12" fill="none" stroke="#e6eef5"><path d="M1 1h10v10H1z" stroke="#8c9cac" /><path d="M3 3l6 6M9 3L3 9" strokeWidth="2" /></svg></button>
        <button type="button" aria-label="전체"><svg width="12" height="12" fill="#fff" stroke="#000"><path d="M.5.5h11v11H.5zM2 2l8 8M10 2l-8 8" /></svg></button>
      </div>
    </div>
  );
}

const ERASER = <path d="M4 10l5-4h5l-5 4zM4 10h5v4H4zM9 14l5-4V6" fill="#fff" stroke="#22a" />;

const DRAW_TOOLS: [string, ReactNode][] = [
  ['새로고침', <><path d="M16 0v16H0z" fill="#aaa" /><path d="M9 2C5 2 4 4 4 6M13 8c0 4-2 5-4 5" fill="none" stroke="#00a" strokeWidth="2" /><path d="M1 6h7L4.500 10zM9.500 9h6L12.500 5z" fill="#00a" /></>],
  ['동기화', <><rect x="1.500" y="1.500" width="4" height="13" rx="1.500" fill="#fff" stroke="#33c" /><rect x="10.500" y="1.500" width="4" height="13" rx="1.500" fill="#fff" stroke="#33c" /><path d="M3.500 4v8M12.500 4v8" stroke="#d00" strokeDasharray="3 2" /><path d="M6 4h4M6 12h4" stroke="#d00" strokeWidth="2" /></>],
  ['선택', <path d="M4 1v12l3-3 2 5 2-1-2-5h4z" fill="#00a" />],
  ['비율', <path d="M3 13L13 3M3 3h4v3H3zM9 10h4v3H9z" fill="none" stroke="#fff" strokeWidth="1.500" />],
  ['선택 지우기', <><path d="M3 3l3 3 6-5" fill="none" stroke="#d00" strokeWidth="2" />{ERASER}</>],
  ['모두 지우기', <><path d="M1.500 6V2h2v4M1.500 4h2M6.500 1v5h2M10.500 1v5h2" fill="none" stroke="#d00" />{ERASER}</>],
  ['수평선', <><path d="M2 8h12" stroke="#00a" /><path d="M2 6h3v4H2zM11 6h3v4h-3z" fill="#d00" /></>],
  ['채널', <><path d="M4.500 10v4h8V5" fill="none" stroke="#00a" /><path d="M3 6h3v5H3z" fill="#00a" /><path d="M11 2h3v4h-3z" fill="#d00" /></>],
  ['추세선', <><path d="M3 13L13 3" stroke="#00a" /><path d="M2 11h3v3H2zM11 2h3v3h-3z" fill="#d00" /></>],
  ['각도', <><path d="M2 14L14 2" stroke="#222" /><path d="M2 8V4l1-2h2l1 2v4M2 5h4M8 9h6M11 9v6" fill="none" stroke="#d00" strokeWidth="1.800" /></>],
  ['피보나치', <><path d="M2 2.500h12M4 4.500h10M6 6.500h8" stroke="#d00" /><path d="M8 8.500h6M6 10.500h8M4 12.500h10M2 14.500h12" stroke="#00a" /></>],
  ['문자', <path d="M3 2h11v4h-1.500L12 4h-2v8l2 .5V14H5v-1.500L7 12V4H5l-.5 2H3z" fill="#33c" />],
  ['위 화살표', <path d="M8 2l5 6h-3v6H6V8H3z" fill="#33c" />],
  ['아래 화살표', <path d="M8 14l5-6h-3V2H6v6H3z" fill="#33c" />],
  ['사각형', <><path d="M2.500 2.500h11v11h-11z" fill="#fff" stroke="#33c" /><path d="M4 4h8v8H4z" fill="#f06060" /></>],
  ['원', <><circle cx="8" cy="8" r="6" fill="#fff" stroke="#33c" /><circle cx="8" cy="8" r="4" fill="#f06060" /></>],
  ['스마일', <><circle cx="8" cy="8" r="6" fill="#fff" stroke="#33c" /><path d="M4 8.500l4 3 4-3M6 5v2M10 5v2" fill="none" stroke="#33c" /></>],
  ['번호', <><circle cx="8" cy="8" r="6" fill="#fff" stroke="#33c" /><path d="M6.500 5.500L8 4.500v7" fill="none" stroke="#33c" strokeWidth="1.500" /></>],
];

function DrawTools() {
  return (
    <aside className="flex w-[27px] shrink-0 flex-col items-center gap-[7px] border-l border-white bg-[#a5c0d9] pt-[3px]">
      {DRAW_TOOLS.map(([label, icon], i) => (
        <button
          key={label}
          type="button"
          aria-label={label}
          className={`size-[18px] border ${i === 3 ? 'border-[#e8f0f6] bg-[#b4c4d2]' : 'border-[#777] bg-[#f2f2f2]'} ${i === 2 ? 'outline-3 outline-[#e9eff5]' : ''}`}
        >
          <svg width="16" height="16" viewBox="0 0 16 16">{icon}</svg>
        </button>
      ))}
    </aside>
  );
}

const QUOTE_COLUMNS = ['종목명(26)', '현재가', '전일대비(%)', '거래량', '매도가', '매수가', '매도총잔량', '매수총잔량', '체결량'];

function QuoteTable() {
  return (
    <div className="flex w-[851px] shrink-0 overflow-hidden bg-[#dcdcff] font-['Noto_Sans','Noto_Sans_CJK_KR',sans-serif] text-xs">
      <table className="-mt-2 w-[836px] table-fixed border-collapse">
        <colgroup>
          <col className="w-[100px]" />
          <col className="w-[53px]" />
          <col className="w-[99px]" />
          <col className="w-[100px]" />
          <col className="w-[100px]" />
          <col className="w-[100px]" />
          <col className="w-[100px]" />
          <col className="w-[100px]" />
          <col className="w-[84px]" />
        </colgroup>
        <thead>
          <tr className="h-4 bg-[#e9f3fb] text-[#445]">
            {QUOTE_COLUMNS.map((name) => (
              <th key={name} className="relative border-r-2 border-b border-[#a0a0a0] p-0 leading-4 font-normal whitespace-nowrap">
                {name === '거래량' && <span className="absolute bottom-0.5 left-1 border-x-4 border-t-4 border-x-transparent border-t-[#0000c0]" />}
                {name}
              </th>
            ))}
          </tr>
        </thead>
        <tbody>
          <tr className="h-4 text-right leading-4 text-[#111]">
            <td className="border-r border-black p-0 text-left text-[13px] leading-4">삼성전자</td>
            <td className="p-0 pr-1.5 text-[#d8001c]">77,600</td>
            <td className="p-0 pr-1.5 text-[#d8001c]">
              <span className="float-left ml-0.5">▲</span>300 ( 0.39)
            </td>
            <td className="p-0 pr-1.5">5,658,144</td>
            <td className="p-0 pr-1.5 text-[#d8001c]">77,700</td>
            <td className="p-0 pr-1.5 text-[#d8001c]">77,600</td>
            <td className="p-0 pr-1.5">2,728,426</td>
            <td className="p-0 pr-1.5">2,275,177</td>
            <td className="p-0 text-[#0000c0]">2</td>
          </tr>
        </tbody>
      </table>
      <div className="w-[15px] border-r border-[#808080] bg-[#e8e8e8]">
        <div className="flex h-2 justify-center border-b border-[#888]">
          <svg width="8" height="4"><path d="M0 4h8L4 0z" /></svg>
        </div>
      </div>
    </div>
  );
}

function SecondWindow() {
  return (
    <div className="flex min-w-0 flex-1 flex-col border-l-2 border-[#4a668f] bg-[#203354]">
      <div className="flex h-[15px] items-start justify-end gap-1.5 pr-2 text-[#d8d8d8]">
        <svg width="11" height="11" fill="none" stroke="currentColor"><path d="M1.500 1v8M3.500 1.500h7v8h-7zM5 4h1M7 4h2M5 7h1M7 7h2" /></svg>
        <svg width="11" height="11" fill="none" stroke="currentColor"><path d="M.5.500h10v9H.5zM2 3h7M2 5h7M2 7h7" /></svg>
        <svg width="11" height="11" stroke="#fff" strokeWidth="2"><path d="M1 1l7 7M8 1L1 8" /></svg>
      </div>
      <div className="flex h-[7px] items-start overflow-hidden border-t-2 border-[#141c30] font-['DejaVu_Sans',sans-serif] text-[11px] leading-[11px] font-bold">
        <div className="flex w-[203px] gap-3 bg-white pt-0.5 pl-2 whitespace-nowrap text-[#c81400]">
          <span>89.8</span>
          <span>0.41</span>
          <span className="text-black">90,750억</span>
        </div>
        <span className="h-full w-[65px] bg-[#0e2358]" />
        <div className="flex w-[282px] gap-8 bg-white pt-0.5 pl-1 whitespace-nowrap text-[#0050e0]">
          <span>291,700</span>
          <span>3,700</span>
          <span>1.31.0</span>
          <span className="text-black">291,900</span>
        </div>
      </div>
    </div>
  );
}

export default function App() {
  return (
    <div className="flex h-screen min-w-[1200px] flex-col overflow-hidden bg-[#4a5d7c] font-['Noto_Sans_CJK_KR',sans-serif] text-black">
      <TitleStrip />
      <MenuBar />
      <div className="h-0.5 shrink-0 border-t border-[#3c6ca0] bg-white" />
      <MainToolbar />
      <main className="mt-[3px] flex shrink-0 flex-col px-px">
        <section className="border-2 border-[#1f3a68]">
          <div className="border border-white">
            <WindowTitle />
            <div className="flex">
              <div className="min-w-0 flex-1 bg-[#c0c0c0]">
                <ChartToolbar />
                <PriceChart />
                <VolumeChart />
                <MacdChart />
                <TimeAxis />
                <Navigator />
              </div>
              <DrawTools />
            </div>
          </div>
        </section>
      </main>
      <footer className="flex min-h-0 flex-1 overflow-hidden">
        <QuoteTable />
        <SecondWindow />
      </footer>
    </div>
  );
}
